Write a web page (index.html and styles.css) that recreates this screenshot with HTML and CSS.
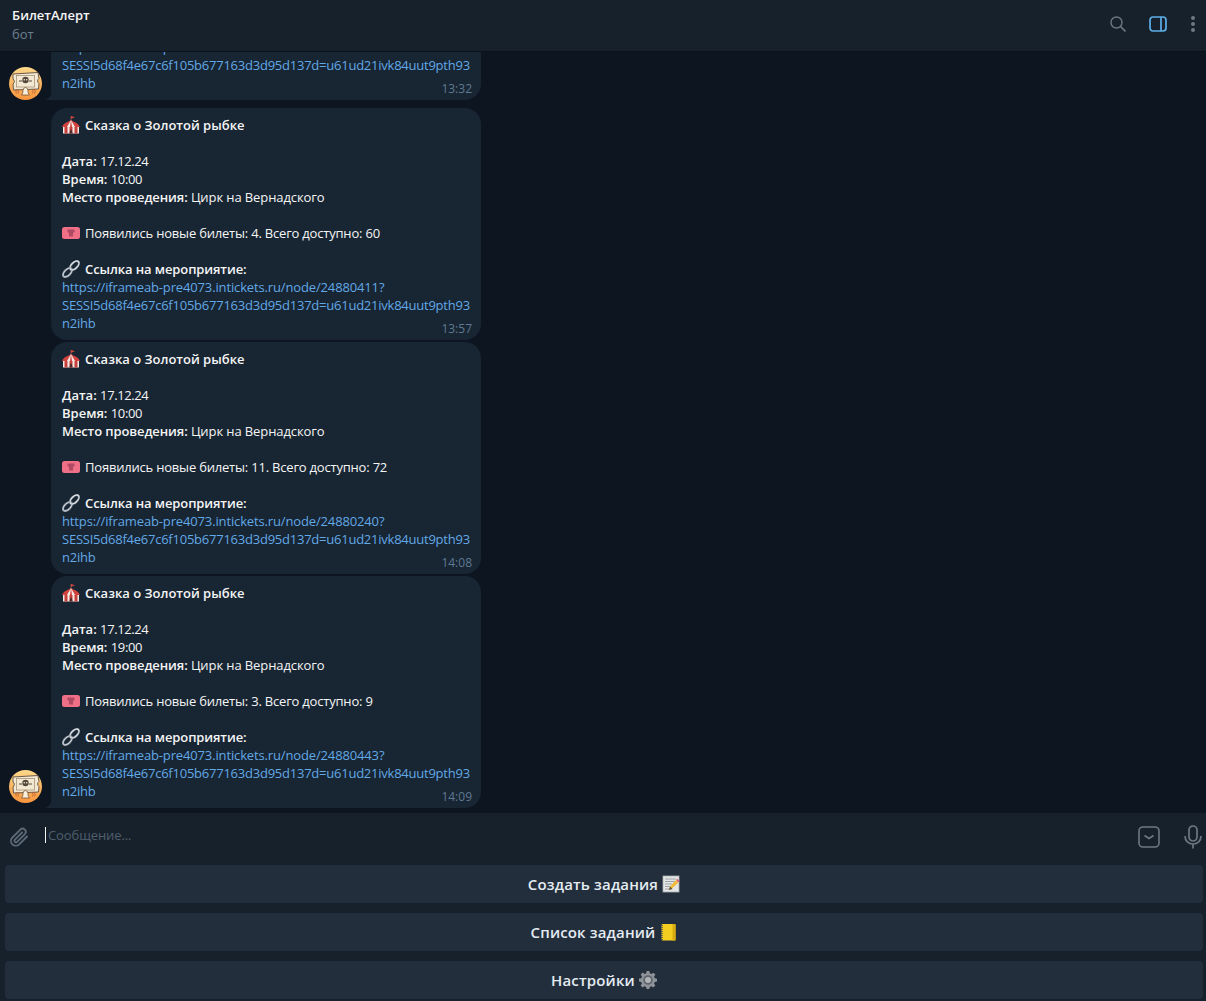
FILE: index.html
```html
<!DOCTYPE html>
<html lang="ru">
  <head>
    <meta charset="UTF-8" />
    <title>БилетАлерт</title>
    <link rel="stylesheet" href="styles.css">
  </head>
  <body>
    <svg class="sprites" width="0" height="0">
      <symbol id="avatar" viewBox="0 0 33 33">
        <defs>
          <linearGradient id="avatarBg" x1="0" y1="0" x2="0" y2="1">
            <stop offset="0" stop-color="#fcd98a" />
            <stop offset="1" stop-color="#f7943c" />
          </linearGradient>
        </defs>
        <circle cx="16.5" cy="16.5" r="16.5" fill="url(#avatarBg)" />
        <path d="M4 7l25-1.500 1 6a3 3 0 0 0 0 5l-.500 5.500-25 1-.500-6a3 3 0 0 0 0-5z" fill="#f3e8d2" stroke="#6b5a48" />
        <rect x="7.500" y="8.500" width="18" height="11.500" fill="none" stroke="#a5937c" stroke-width=".8" />
        <circle cx="16.500" cy="13" r="3.200" fill="#55483c" />
        <circle cx="15.300" cy="12.800" r=".8" fill="#f3e8d2" />
        <circle cx="17.700" cy="12.800" r=".8" fill="#f3e8d2" />
        <path d="M10 14h3M20 14h3" stroke="#55483c" />
        <path d="M16.500 20.500c-2.200 0-2.500 2.500-2.700 5-.1 1-.8 1.500-1.300 2.500h8c-.5-1-1.200-1.500-1.300-2.500-.2-2.500-.5-5-2.700-5z" fill="#f8efdc" stroke="#7a5030" stroke-width=".8" />
        <path d="M9.500 22c-.6 1.500-.6 3 0 4.500M7.500 22c-.8 1.500-.8 3 0 4.500M23.500 22c.6 1.500.6 3 0 4.500M25.500 22c.8 1.500.8 3 0 4.500" fill="none" stroke="#b4582a" stroke-width=".8" />
      </symbol>

      <symbol id="tent" viewBox="0 0 18 18">
        <path d="M9 0v5" stroke="#8a5a50" stroke-width=".8" />
        <path d="M9 0l4 1.300L9 2.800z" fill="#d8453a" />
        <path d="M9 4C6 6 1.500 7 0 11h18c-1.500-4-6-5-9-7z" fill="#d0433f" />
        <path d="M9 4L5 11h3zM9 4l4 7h-3z" fill="#f5ebe5" />
        <path d="M1 11h16v6.500H1z" fill="#f2e9e3" />
        <path d="M2.500 11h3v6.500h-3zM7.500 11h3v6.500h-3zM12.500 11h3v6.500h-3z" fill="#c83f3c" />
        <path d="M7.500 17.500c.3-2 .8-3.500 1.500-4.500.7 1 1.200 2.500 1.500 4.500z" fill="#4a2b2b" />
      </symbol>

      <symbol id="ticket" viewBox="0 0 18 12">
        <rect x="0" y="0" width="18" height="12" rx="2.500" fill="#ef6f86" />
        <path d="M5.500 2.500h7v2.500l-1.500 1v3.500H7V6L5.500 5z" fill="#b04a62" />
      </symbol>

      <symbol id="link" viewBox="0 0 18 18">
        <g fill="none">
          <ellipse cx="5.500" cy="12.500" rx="5.500" ry="3" transform="rotate(-45 5.500 12.500)" stroke="#7f8b96" stroke-width="2.200" />
          <ellipse cx="5.500" cy="12.500" rx="5.500" ry="3" transform="rotate(-45 5.500 12.500)" stroke="#dfe3e7" stroke-width=".9" />
          <ellipse cx="12.500" cy="5.500" rx="5.500" ry="3" transform="rotate(-45 12.500 5.500)" stroke="#7f8b96" stroke-width="2.200" />
          <ellipse cx="12.500" cy="5.500" rx="5.500" ry="3" transform="rotate(-45 12.500 5.500)" stroke="#eef0f2" stroke-width="1" />
        </g>
      </symbol>

      <symbol id="memo" viewBox="0 0 18 18">
        <rect x="1" y="1" width="16" height="16" fill="#e4e6e6" stroke="#a9aeb0" stroke-width=".8" />
        <path d="M3 4h11M3 6.500h11M3 9h7M3 11.500h5M3 14h4" stroke="#8a9298" stroke-width=".8" />
        <path d="M7 15l1-3.500 6-6.500 2.500 2.500-6.500 6z" fill="#f2bb3c" />
        <path d="M14 5l1.200-1.300 2.300 2.300L16.500 7.500z" fill="#e0607a" />
        <path d="M7 15l1-3.500 2.500 2.500z" fill="#5a4a40" />
      </symbol>

      <symbol id="notebook" viewBox="0 0 16 18">
        <rect x="1.500" y="1" width="14" height="16.500" rx="1.200" fill="#f3cd1f" />
        <rect x="12.500" y="1" width="3" height="16.500" fill="#d9ab10" />
        <path d="M1 2.500h2M1 4.500h2M1 6.500h2M1 8.500h2M1 10.500h2M1 12.500h2M1 14.500h2M1 16.500h2" stroke="#5a5a5a" stroke-width=".9" />
      </symbol>

      <symbol id="gear" viewBox="0 0 18 18">
        <path d="M7.600 0h2.800l.4 2.300 1.700.7 1.900-1.300 2 2-1.400 1.900.7 1.700 2.300.4v2.800l-2.300.4-.7 1.700 1.300 1.900-2 2-1.900-1.300-1.700.7-.4 2.300H7.600l-.4-2.300-1.700-.7-1.900 1.300-2-2 1.300-1.900-.7-1.700L0 10.400V7.600l2.300-.4.7-1.700-1.300-1.900 2-2 1.900 1.300 1.700-.7z" fill="#8f9499" />
        <circle cx="9" cy="9" r="4.800" fill="#5f656b" />
        <circle cx="9" cy="9" r="3" fill="#aeb3b8" />
      </symbol>
    </svg>

    <div class="app">
      <header class="topbar">
        <div class="peer">
          <div class="peer-name">БилетАлерт</div>
          <div class="peer-status">бот</div>
        </div>
        <div class="topbar-icons">
          <svg class="icon-search" width="16" height="16" viewBox="0 0 16 16">
            <circle cx="6.500" cy="6.500" r="5.500" fill="none" stroke="#6c7883" stroke-width="1.400" />
            <path d="M10.500 10.500l5 5" stroke="#6c7883" stroke-width="1.600" />
          </svg>
          <svg width="18" height="16" viewBox="0 0 18 16">
            <rect x="1" y="1" width="16" height="14" rx="3" fill="none" stroke="#5eaee8" stroke-width="1.700" />
            <path d="M12 1v14" stroke="#5eaee8" stroke-width="1.700" />
          </svg>
          <svg width="4" height="16" viewBox="0 0 4 16">
            <circle cx="2" cy="2" r="2" fill="#6c7883" />
            <circle cx="2" cy="8" r="2" fill="#6c7883" />
            <circle cx="2" cy="14" r="2" fill="#6c7883" />
          </svg>
        </div>
      </header>

      <main class="chat">
        <div class="msg msg-last">
          <svg class="avatar" width="33" height="33"><use href="#avatar" /></svg>
          <div class="bubble">
            <svg class="tail" width="8" height="12" viewBox="0 0 8 12"><path d="M8 0v12H0c3-1 6-3 8-12z" /></svg>
            <p>
              <a><span class="host">https://iframeab-pre4073.intickets.ru/node/24880444?</span><br />SESSI5d68f4e67c6f105b677163d3d95d137d=u61ud21ivk84uut9pth93<br />n2ihb</a>
            </p>
            <span class="time">13:32</span>
          </div>
        </div>

        <div class="msg msg-first">
          <div class="bubble">
            <p><svg class="emoji"><use href="#tent" /></svg><b>Сказка о Золотой рыбке</b></p>
            <p>&nbsp;</p>
            <p><b>Дата:</b> <span class="num">17.12.24</span></p>
            <p><b>Время:</b> <span class="num">10:00</span></p>
            <p class="tight"><b>Место проведения:</b> Цирк на Вернадского</p>
            <p>&nbsp;</p>
            <p class="news"><svg class="emoji"><use href="#ticket" /></svg>Появились новые билеты: 4. Всего доступно: 60</p>
            <p>&nbsp;</p>
            <p class="tight"><svg class="emoji"><use href="#link" /></svg><b>Ссылка на мероприятие:</b></p>
            <p><a><span class="host">https://iframeab-pre4073.intickets.ru/node/24880411?</span><br />SESSI5d68f4e67c6f105b677163d3d95d137d=u61ud21ivk84uut9pth93<br />n2ihb</a></p>
            <span class="time">13:57</span>
          </div>
        </div>

        <div class="msg">
          <div class="bubble">
            <p><svg class="emoji"><use href="#tent" /></svg><b>Сказка о Золотой рыбке</b></p>
            <p>&nbsp;</p>
            <p><b>Дата:</b> <span class="num">17.12.24</span></p>
            <p><b>Время:</b> <span class="num">10:00</span></p>
            <p class="tight"><b>Место проведения:</b> Цирк на Вернадского</p>
            <p>&nbsp;</p>
            <p class="news"><svg class="emoji"><use href="#ticket" /></svg>Появились новые билеты: 11. Всего доступно: 72</p>
            <p>&nbsp;</p>
            <p class="tight"><svg class="emoji"><use href="#link" /></svg><b>Ссылка на мероприятие:</b></p>
            <p><a><span class="host">https://iframeab-pre4073.intickets.ru/node/24880240?</span><br />SESSI5d68f4e67c6f105b677163d3d95d137d=u61ud21ivk84uut9pth93<br />n2ihb</a></p>
            <span class="time">14:08</span>
          </div>
        </div>

        <div class="msg msg-last msg-end">
          <svg class="avatar" width="33" height="33"><use href="#avatar" /></svg>
          <div class="bubble">
            <svg class="tail" width="8" height="12" viewBox="0 0 8 12"><path d="M8 0v12H0c3-1 6-3 8-12z" /></svg>
            <p><svg class="emoji"><use href="#tent" /></svg><b>Сказка о Золотой рыбке</b></p>
            <p>&nbsp;</p>
            <p><b>Дата:</b> <span class="num">17.12.24</span></p>
            <p><b>Время:</b> <span class="num">19:00</span></p>
            <p class="tight"><b>Место проведения:</b> Цирк на Вернадского</p>
            <p>&nbsp;</p>
            <p class="news"><svg class="emoji"><use href="#ticket" /></svg>Появились новые билеты: 3. Всего доступно: 9</p>
            <p>&nbsp;</p>
            <p class="tight"><svg class="emoji"><use href="#link" /></svg><b>Ссылка на мероприятие:</b></p>
            <p><a><span class="host">https://iframeab-pre4073.intickets.ru/node/24880443?</span><br />SESSI5d68f4e67c6f105b677163d3d95d137d=u61ud21ivk84uut9pth93<br />n2ihb</a></p>
            <span class="time">14:09</span>
          </div>
        </div>
      </main>

      <footer class="composer">
        <svg width="20" height="22" viewBox="0 0 20 22">
          <path d="M18 10.500l-7.800 7.800a4.800 4.800 0 0 1-6.800-6.800l8.200-8.200a3.200 3.200 0 0 1 4.500 4.500l-8 8a1.500 1.500 0 0 1-2.200-2.200l7.300-7.300" fill="none" stroke="#5d6b78" stroke-width="1.800" stroke-linecap="round" />
        </svg>
        <div class="field">
          <span class="caret"></span>
          <span class="placeholder">Сообщение...</span>
        </div>
        <svg class="icon-keyboard" width="22" height="22" viewBox="0 0 22 22">
          <rect x="1" y="1" width="20" height="20" rx="4" fill="none" stroke="#6c7883" stroke-width="1.600" />
          <path d="M6.500 9.500l4.500 3 4.500-3" fill="none" stroke="#6c7883" stroke-width="1.600" />
        </svg>
        <svg width="18" height="24" viewBox="0 0 18 24">
          <rect x="5" y="1" width="8" height="15" rx="4" fill="none" stroke="#6c7883" stroke-width="1.700" />
          <path d="M1 11c0 5 3.500 8 8 8s8-3 8-8M9 19v4.500" fill="none" stroke="#6c7883" stroke-width="1.700" />
        </svg>
      </footer>

      <nav class="keyboard">
        <button class="kb-btn">Создать задания <svg class="kb-emoji"><use href="#memo" /></svg></button>
        <button class="kb-btn">Список заданий <svg class="kb-emoji"><use href="#notebook" /></svg></button>
        <button class="kb-btn">Настройки <svg class="kb-emoji"><use href="#gear" /></svg></button>
      </nav>
    </div>
  </body>
</html>
```

FILE: styles.css
```css
* {
  box-sizing: border-box;
}
body {
  margin: 0;
  background-color: #17212b;
  color: #f5f5f5;
  font-family: "Open Sans", "Noto Sans", sans-serif;
  font-size: 13px;
  line-height: 18px;
  overflow: hidden;
}
.sprites {
  display: block;
  height: 0;
}
.app {
  display: flex;
  flex-direction: column;
  height: 1001px;
}
.topbar {
  flex: 0 0 52px;
  display: flex;
  align-items: flex-start;
  justify-content: space-between;
  padding: 6px 11px 0 12px;
  background-color: #17212b;
  border-bottom: 1px solid #0b121a;
}
.peer-name {
  font-weight: 600;
}
.peer-status {
  margin-top: 1px;
  color: #6d7f8f;
}
.topbar-icons {
  display: flex;
  align-items: center;
  gap: 24px;
  padding-top: 10px;
}
.icon-search {
  margin-right: -1px;
}
.chat {
  flex: 1 1 0;
  min-height: 0;
  display: flex;
  flex-direction: column;
  justify-content: flex-end;
  gap: 2px;
  padding: 0 0 5px 9px;
  overflow: hidden;
  background-color: #0d1520;
}
.msg {
  flex: none;
  display: flex;
  align-items: flex-end;
  padding-left: 42px;
}
.msg-first {
  margin-top: 6px;
}
.msg-last {
  padding-left: 0;
  gap: 9px;
}
.avatar {
  flex: none;
}
.msg-end .avatar {
  margin-bottom: 5px;
}
.bubble {
  position: relative;
  width: 430px;
  padding: 8px 11px;
  background-color: #182533;
  border-radius: 16px;
}
.msg-last .bubble {
  border-bottom-left-radius: 0;
}
.tail {
  position: absolute;
  left: -6px;
  bottom: 0;
  fill: #182533;
}
.bubble p {
  margin: 0;
  white-space: nowrap;
}
.bubble b {
  font-weight: 600;
}
.bubble a {
  color: #62a9e6;
  letter-spacing: -0.235px;
}
.host {
  letter-spacing: -0.14px;
}
.num {
  letter-spacing: -0.4px;
}
.news {
  letter-spacing: -0.2px;
}
.tight {
  letter-spacing: -0.1px;
}
.time {
  position: absolute;
  right: 9px;
  bottom: 2px;
  font-size: 12px;
  color: #5f7a92;
}
.emoji {
  width: 18px;
  height: 18px;
  margin-right: 5px;
  vertical-align: -4px;
}
.composer {
  flex: 0 0 47px;
  display: flex;
  align-items: center;
  gap: 16px;
  padding: 0 4px 0 9px;
  background-color: #17212b;
}
.field {
  flex: 1;
  display: flex;
  align-items: center;
  gap: 2px;
  padding-bottom: 3px;
  letter-spacing: -0.1px;
}
.caret {
  width: 1px;
  height: 16px;
  background-color: #f5f5f5;
}
.placeholder {
  color: #4f5e6c;
}
.icon-keyboard {
  margin-right: 8px;
}
.keyboard {
  flex: none;
  display: flex;
  flex-direction: column;
  gap: 10px;
  padding: 5px 3px 2px 5px;
}
.kb-btn {
  height: 38px;
  border: none;
  border-radius: 4px;
  background-color: #232e3c;
  color: #e4ecf2;
  font-family: inherit;
  font-size: 15px;
  font-weight: 600;
  letter-spacing: 0.15px;
}
.kb-emoji {
  width: 18px;
  height: 18px;
  vertical-align: -3px;
}
```
